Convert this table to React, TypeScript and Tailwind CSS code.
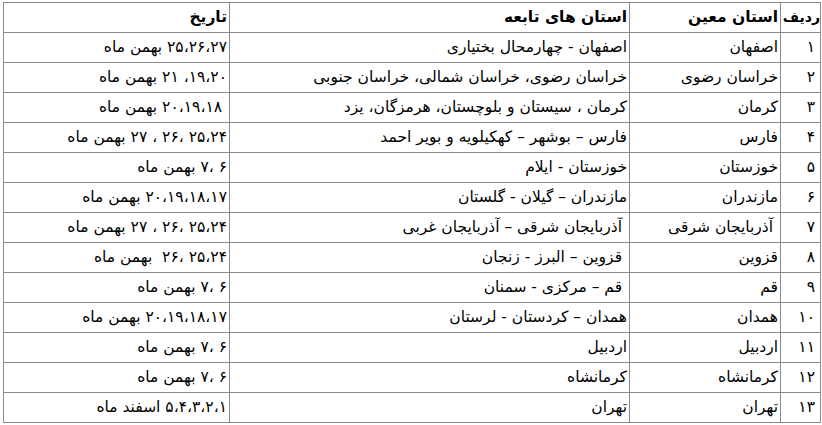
const rows = [
  ["۱", "اصفهان", "اصفهان - چهارمحال بختیاری", "۲۵،۲۶،۲۷ بهمن ماه"],
  ["۲", "خراسان رضوی", "خراسان رضوی، خراسان شمالی، خراسان جنوبی", "۱۹،۲۰، ۲۱ بهمن ماه"],
  ["۳", "کرمان", "کرمان ، سیستان و بلوچستان، هرمزگان، یزد", " ۲۰،۱۹،۱۸ بهمن ماه"],
  ["۴", "فارس", "فارس – بوشهر – کهکیلویه و بویر احمد", "۲۵،۲۴ ،۲۶ ، ۲۷ بهمن ماه"],
  ["۵", "خوزستان", "خوزستان - ایلام", "۶ ،۷ بهمن ماه"],
  ["۶", "مازندران", "مازندران – گیلان - گلستان", "۲۰،۱۹،۱۸،۱۷ بهمن ماه"],
  ["۷", " آذربایجان شرقی", " آذربایجان شرقی – آذربایجان غربی", "۲۵،۲۴ ،۲۶ ، ۲۷ بهمن ماه"],
  ["۸", "قزوین", " قزوین – البرز - زنجان", "۲۵،۲۴ ،۲۶  بهمن ماه"],
  ["۹", "قم", " قم – مرکزی - سمنان", "۶ ،۷ بهمن ماه"],
  ["۱۰", "همدان", "همدان – کردستان - لرستان", "۲۰،۱۹،۱۸،۱۷ بهمن ماه"],
  ["۱۱", "اردبیل", "اردبیل", "۶ ،۷ بهمن ماه"],
  ["۱۲", "کرمانشاه", "کرمانشاه", "۶ ،۷ بهمن ماه"],
  ["۱۳", "تهران", "تهران", "۵،۴،۳،۲،۱ اسفند ماه"],
];

const cell = "border border-[#8a8a8a] h-[30px] px-[2px] text-right align-middle whitespace-pre";

export default function App() {
  return (
    <div className="min-h-screen bg-white pl-[3px] pt-[2px] font-['DejaVu_Sans',sans-serif] text-[15.5px] text-black">
      <table dir="rtl" className="table-fixed border-collapse w-[817px]">
        <colgroup>
          <col className="w-[40px]" />
          <col className="w-[151px]" />
          <col className="w-[400px]" />
          <col className="w-[226px]" />
        </colgroup>
        <thead>
          <tr>
            <th className={cell + " font-bold !px-0 text-[14px]"}>ردیف</th>
            <th className={cell + " font-bold"}>استان معین</th>
            <th className={cell + " font-bold"}>استان های تابعه</th>
            <th className={cell + " font-bold"}>تاریخ</th>
          </tr>
        </thead>
        <tbody>
          {rows.map((r) => (
            <tr key={r[0]}>
              <td className={cell + " pr-[5px]"}>{r[0]}</td>
              <td className={cell}>{r[1]}</td>
              <td className={cell}>{r[2]}</td>
              <td className={cell}>{r[3]}</td>
            </tr>
          ))}
        </tbody>
      </table>
    </div>
  );
}
